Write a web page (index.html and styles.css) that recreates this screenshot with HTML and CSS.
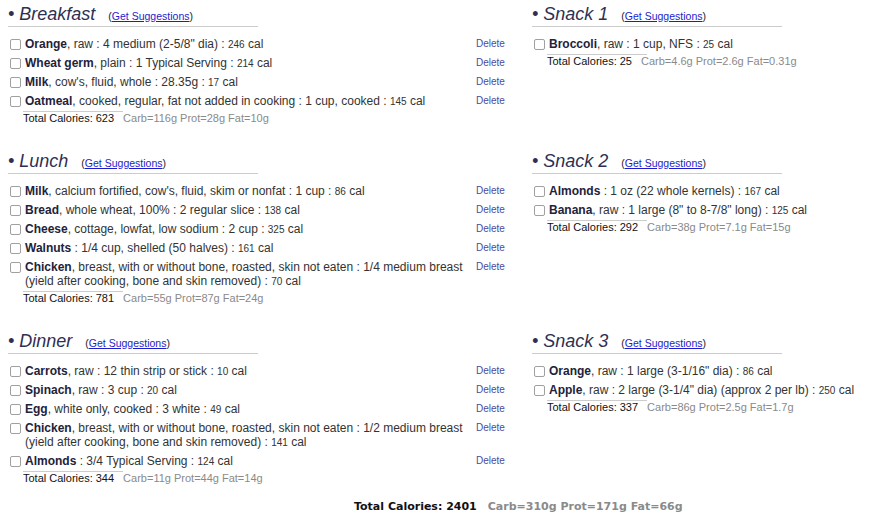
FILE: index.html
```html
<!DOCTYPE html>
<html>
<head>
<meta charset="utf-8">
<title>Meal Plan</title>
<link rel="stylesheet" href="styles.css">
</head>
<body>
<div class="plan">

  <section class="meal">
    <div class="meal-head"><span class="title">&bull; Breakfast</span><span class="sugg">(<a href="#">Get Suggestions</a>)</span></div>
    <div class="items">
      <div class="item"><input type="checkbox" class="chk"><div class="desc"><b>Orange</b>, raw : 4 medium (2-5/8" dia) : <span class="cal">246</span> cal</div><a class="del" href="#">Delete</a></div>
      <div class="item"><input type="checkbox" class="chk"><div class="desc"><b>Wheat germ</b>, plain : 1 Typical Serving : <span class="cal">214</span> cal</div><a class="del" href="#">Delete</a></div>
      <div class="item"><input type="checkbox" class="chk"><div class="desc"><b>Milk</b>, cow's, fluid, whole : 28.35g : <span class="cal">17</span> cal</div><a class="del" href="#">Delete</a></div>
      <div class="item"><input type="checkbox" class="chk"><div class="desc"><b>Oatmeal</b>, cooked, regular, fat not added in cooking : 1 cup, cooked : <span class="cal">145</span> cal</div><a class="del" href="#">Delete</a></div>
    </div>
    <div class="total">Total Calories: 623<span class="macros">Carb=116g Prot=28g Fat=10g</span></div>
  </section>

  <section class="meal snack">
    <div class="meal-head"><span class="title">&bull; Snack 1</span><span class="sugg">(<a href="#">Get Suggestions</a>)</span></div>
    <div class="items">
      <div class="item"><input type="checkbox" class="chk"><div class="desc"><b>Broccoli</b>, raw : 1 cup, NFS : <span class="cal">25</span> cal</div></div>
    </div>
    <div class="total">Total Calories: 25<span class="macros">Carb=4.6g Prot=2.6g Fat=0.31g</span></div>
  </section>

  <section class="meal">
    <div class="meal-head"><span class="title">&bull; Lunch</span><span class="sugg">(<a href="#">Get Suggestions</a>)</span></div>
    <div class="items">
      <div class="item"><input type="checkbox" class="chk"><div class="desc"><b>Milk</b>, calcium fortified, cow's, fluid, skim or nonfat : 1 cup : <span class="cal">86</span> cal</div><a class="del" href="#">Delete</a></div>
      <div class="item"><input type="checkbox" class="chk"><div class="desc"><b>Bread</b>, whole wheat, 100% : 2 regular slice : <span class="cal">138</span> cal</div><a class="del" href="#">Delete</a></div>
      <div class="item"><input type="checkbox" class="chk"><div class="desc"><b>Cheese</b>, cottage, lowfat, low sodium : 2 cup : <span class="cal">325</span> cal</div><a class="del" href="#">Delete</a></div>
      <div class="item"><input type="checkbox" class="chk"><div class="desc"><b>Walnuts</b> : 1/4 cup, shelled (50 halves) : <span class="cal">161</span> cal</div><a class="del" href="#">Delete</a></div>
      <div class="item"><input type="checkbox" class="chk"><div class="desc"><b>Chicken</b>, breast, with or without bone, roasted, skin not eaten : 1/4 medium breast (yield after cooking, bone and skin removed) : <span class="cal">70</span> cal</div><a class="del" href="#">Delete</a></div>
    </div>
    <div class="total">Total Calories: 781<span class="macros">Carb=55g Prot=87g Fat=24g</span></div>
  </section>

  <section class="meal snack">
    <div class="meal-head"><span class="title">&bull; Snack 2</span><span class="sugg">(<a href="#">Get Suggestions</a>)</span></div>
    <div class="items">
      <div class="item"><input type="checkbox" class="chk"><div class="desc"><b>Almonds</b> : 1 oz (22 whole kernels) : <span class="cal">167</span> cal</div></div>
      <div class="item"><input type="checkbox" class="chk"><div class="desc"><b>Banana</b>, raw : 1 large (8" to 8-7/8" long) : <span class="cal">125</span> cal</div></div>
    </div>
    <div class="total">Total Calories: 292<span class="macros">Carb=38g Prot=7.1g Fat=15g</span></div>
  </section>

  <section class="meal">
    <div class="meal-head"><span class="title">&bull; Dinner</span><span class="sugg">(<a href="#">Get Suggestions</a>)</span></div>
    <div class="items">
      <div class="item"><input type="checkbox" class="chk"><div class="desc"><b>Carrots</b>, raw : 12 thin strip or stick : <span class="cal">10</span> cal</div><a class="del" href="#">Delete</a></div>
      <div class="item"><input type="checkbox" class="chk"><div class="desc"><b>Spinach</b>, raw : 3 cup : <span class="cal">20</span> cal</div><a class="del" href="#">Delete</a></div>
      <div class="item"><input type="checkbox" class="chk"><div class="desc"><b>Egg</b>, white only, cooked : 3 white : <span class="cal">49</span> cal</div><a class="del" href="#">Delete</a></div>
      <div class="item"><input type="checkbox" class="chk"><div class="desc"><b>Chicken</b>, breast, with or without bone, roasted, skin not eaten : 1/2 medium breast (yield after cooking, bone and skin removed) : <span class="cal">141</span> cal</div><a class="del" href="#">Delete</a></div>
      <div class="item"><input type="checkbox" class="chk"><div class="desc"><b>Almonds</b> : 3/4 Typical Serving : <span class="cal">124</span> cal</div><a class="del" href="#">Delete</a></div>
    </div>
    <div class="total">Total Calories: 344<span class="macros">Carb=11g Prot=44g Fat=14g</span></div>
  </section>

  <section class="meal snack">
    <div class="meal-head"><span class="title">&bull; Snack 3</span><span class="sugg">(<a href="#">Get Suggestions</a>)</span></div>
    <div class="items">
      <div class="item"><input type="checkbox" class="chk"><div class="desc"><b>Orange</b>, raw : 1 large (3-1/16" dia) : <span class="cal">86</span> cal</div></div>
      <div class="item"><input type="checkbox" class="chk"><div class="desc"><b>Apple</b>, raw : 2 large (3-1/4" dia) (approx 2 per lb) : <span class="cal">250</span> cal</div></div>
    </div>
    <div class="total">Total Calories: 337<span class="macros">Carb=86g Prot=2.5g Fat=1.7g</span></div>
  </section>

</div>
<div class="grand">Total Calories: 2401<span class="grand-macros">Carb=310g Prot=171g Fat=66g</span></div>
</body>
</html>
```
FILE: styles.css
```css
html, body {
  background: #ffffff;
}
body {
  margin: 0 0 0 8px;
  padding-top: 1px;
  font-family: "Liberation Sans", Arial, sans-serif;
  color: #333333;
}
.plan {
  display: grid;
  grid-template-columns: 524px 1fr;
  align-items: start;
}
.meal {
  margin-bottom: 23px;
  width: 502px;
}
.snack {
  width: auto;
}
.meal-head {
  width: 250px;
  height: 21px;
  padding: 3px 0 1px;
  border-bottom: 1px solid #cccccc;
  display: flex;
  align-items: baseline;
}
.title {
  font-size: 18px;
  line-height: 21px;
  font-style: italic;
  color: #2e2f52;
}
.sugg {
  margin-left: 13px;
  font-size: 10.5px;
  line-height: 12px;
  color: #222222;
}
.sugg a {
  color: #1d1dcc;
  text-decoration: underline;
}
.items {
  margin-top: 8px;
}
.item {
  display: flex;
  align-items: flex-start;
  padding: 2px 0 3px;
  font-size: 12px;
  line-height: 14px;
}
.chk {
  appearance: none;
  -webkit-appearance: none;
  flex: none;
  box-sizing: border-box;
  width: 11px;
  height: 11px;
  margin: 2px 4px 0 2px;
  border: 1px solid #a0a0a0;
  border-radius: 2px;
  background: #ffffff;
}
.desc {
  flex: 1;
  padding-right: 6px;
  color: #333333;
}
.desc b {
  color: #22223a;
}
.cal {
  font-size: 10px;
  line-height: 10px;
}
.del {
  flex: none;
  width: 34px;
  font-size: 10px;
  line-height: 14px;
  color: #4b4b9d;
  text-decoration: none;
}
.total {
  padding-left: 15px;
  font-size: 11px;
  line-height: 13px;
  color: #111111;
}
.total::before {
  content: "";
  display: block;
  width: 100px;
  border-top: 1px solid #cccccc;
}
.macros {
  margin-left: 9px;
  color: #8a8a8a;
}
.grand {
  margin-top: -8px;
  padding-left: 346px;
  font-family: "DejaVu Sans", Verdana, sans-serif;
  font-weight: bold;
  font-size: 11px;
  line-height: 14px;
  color: #111111;
}
.grand-macros {
  margin-left: 11px;
  color: #8a8a8a;
}
```
